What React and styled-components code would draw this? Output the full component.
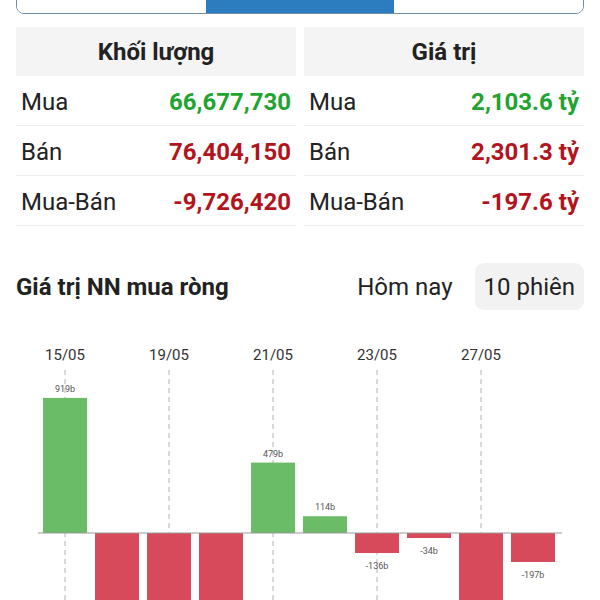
import React from 'react';
import styled, { createGlobalStyle } from 'styled-components';

const GlobalStyle = createGlobalStyle`
  body {
    margin: 0;
    background: #fff;
    font-family: Roboto, "Noto Sans", sans-serif;
    color: #222;
  }
`;

const Page = styled.div`
  padding: 0 16px;
  overflow: hidden;
`;

const TabBar = styled.div`
  margin-top: -30px;
  height: 44px;
  display: grid;
  grid-template-columns: 189px 188px 1fr;
  border: 1px solid #6f8ea8;
  border-radius: 8px;
  overflow: hidden;
  box-sizing: border-box;
`;

const Tab = styled.div`
  display: flex;
  align-items: center;
  justify-content: center;
  padding-bottom: 14px;
  font-size: 17px;
  background: ${p => (p.$active ? '#2c7dc0' : '#fff')};
  color: ${p => (p.$active ? '#fff' : '#222')};
`;

const Tables = styled.div`
  margin-top: 13px;
  display: grid;
  grid-template-columns: 1fr 1fr;
  gap: 8px;
`;

const Card = styled.div`
  display: flex;
  flex-direction: column;
`;

const CardHead = styled.div`
  height: 49px;
  background: #f4f4f4;
  display: flex;
  align-items: center;
  justify-content: center;
  font-size: 24px;
  font-weight: 700;
  color: #222;
`;

const Row = styled.div`
  height: 50px;
  display: flex;
  align-items: center;
  justify-content: space-between;
  padding: 2px 5px 0;
  border-bottom: 1px solid #eeeeee;
  box-sizing: border-box;
  font-size: 24px;
`;

const Label = styled.span`
  color: #222;
`;

const Value = styled.span`
  font-weight: 700;
  color: ${p => (p.$tone === 'up' ? '#1fa42f' : '#b3141c')};
`;

const SectionHead = styled.div`
  margin-top: 37px;
  display: flex;
  align-items: center;
`;

const Title = styled.div`
  flex: 1;
  font-size: 24px;
  font-weight: 700;
  color: #222;
`;

const Switch = styled.div`
  display: flex;
  align-items: center;
  gap: 22px;
`;

const Option = styled.div`
  height: 47px;
  padding: 0 ${p => (p.$active ? '9px' : '0')};
  display: flex;
  align-items: center;
  border-radius: 9px;
  font-size: 24px;
  color: #222;
  background: ${p => (p.$active ? '#f2f2f2' : 'transparent')};
`;

const ChartBox = styled.div`
  margin-top: 20px;
  height: 290px;
  svg {
    display: block;
  }
`;

const tabs = ['Lịch sử giá', 'Nước ngoài', 'Tự doanh'];

const volume = [
  { label: 'Mua', value: '66,677,730', tone: 'up' },
  { label: 'Bán', value: '76,404,150', tone: 'down' },
  { label: 'Mua-Bán', value: '-9,726,420', tone: 'down' },
];

const worth = [
  { label: 'Mua', value: '2,103.6 tỷ', tone: 'up' },
  { label: 'Bán', value: '2,301.3 tỷ', tone: 'down' },
  { label: 'Mua-Bán', value: '-197.6 tỷ', tone: 'down' },
];

const bars = [919, -620, -580, -660, 479, 114, -136, -34, -760, -197];
const dates = ['15/05', '19/05', '21/05', '23/05', '27/05'];

function StatCard({ title, rows }) {
  return (
    <Card>
      <CardHead>{title}</CardHead>
      {rows.map(r => (
        <Row key={r.label}>
          <Label>{r.label}</Label>
          <Value $tone={r.tone}>{r.value}</Value>
        </Row>
      ))}
    </Card>
  );
}

function NetChart() {
  const base = 533;
  const k = 0.147;
  return (
    <svg width="568" height="290" viewBox="16 330 568 290">
      {dates.map((d, i) => (
        <g key={d}>
          <text x={65 + i * 104} y={360} fontSize="15" fill="#333" textAnchor="middle"
            fontFamily="Roboto, sans-serif">{d}</text>
          <line x1={65 + i * 104} x2={65 + i * 104} y1={370} y2={620}
            stroke="#b4b4b4" strokeWidth="1" strokeDasharray="5 4" />
        </g>
      ))}
      {bars.map((v, i) => {
        const cx = 65 + i * 52;
        const h = Math.abs(v) * k;
        const up = v >= 0;
        const y = up ? base - h : base;
        return (
          <g key={i}>
            <rect x={cx - 22} y={y} width="44" height={h} fill={up ? '#6abd66' : '#d64a5b'} />
            <text x={cx} y={up ? y - 6 : y + h + 16} fontSize="9" fill="#555" textAnchor="middle"
              fontFamily="Roboto, sans-serif">{v}b</text>
          </g>
        );
      })}
      <line x1={38} x2={562} y1={base} y2={base} stroke="#999" strokeWidth="1" />
    </svg>
  );
}

export default function App() {
  return (
    <>
      <GlobalStyle />
      <Page>
        <TabBar>
          {tabs.map((t, i) => (
            <Tab key={t} $active={i === 1}>{t}</Tab>
          ))}
        </TabBar>
        <Tables>
          <StatCard title="Khối lượng" rows={volume} />
          <StatCard title="Giá trị" rows={worth} />
        </Tables>
        <SectionHead>
          <Title>Giá trị NN mua ròng</Title>
          <Switch>
            <Option>Hôm nay</Option>
            <Option $active>10 phiên</Option>
          </Switch>
        </SectionHead>
        <ChartBox>
          <NetChart />
        </ChartBox>
      </Page>
    </>
  );
}
